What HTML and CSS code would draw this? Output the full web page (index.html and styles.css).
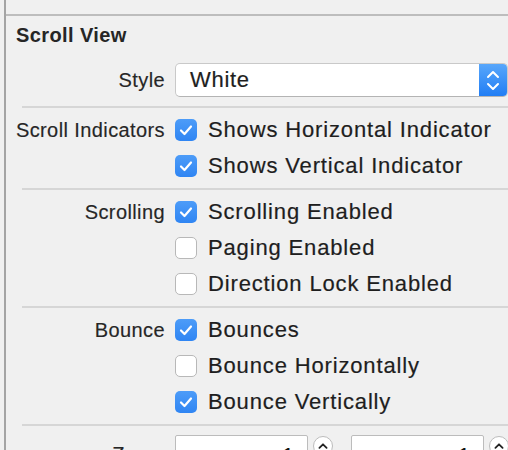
FILE: index.html
```html
<!DOCTYPE html>
<html>
<head>
<meta charset="utf-8">
<link rel="stylesheet" href="styles.css">
</head>
<body>
<div class="panel">
  <div class="topstrip"></div>
  <div class="section">
    <h2 class="title">Scroll View</h2>
    <div class="row style-row">
      <span class="lbl">Style</span>
      <div class="popup">
        <span class="popup-text">White</span>
        <span class="stepper">
          <svg width="28" height="34" viewBox="0 0 28 34"><polyline points="9,14 14,9 19,14" fill="none" stroke="#fff" stroke-width="2" stroke-linecap="round" stroke-linejoin="round"/><polyline points="9,21 14,26 19,21" fill="none" stroke="#fff" stroke-width="2" stroke-linecap="round" stroke-linejoin="round"/></svg>
        </span>
      </div>
    </div>
    <div class="group">
      <div class="row"><span class="lbl">Scroll Indicators</span><span class="cb on"><svg width="22" height="22" viewBox="0 0 22 22"><polyline points="6,11.5 9.5,15 16,7.5" fill="none" stroke="#fff" stroke-width="2.2" stroke-linecap="round" stroke-linejoin="round"/></svg></span><span class="txt">Shows Horizontal Indicator</span></div>
      <div class="row"><span class="lbl"></span><span class="cb on"><svg width="22" height="22" viewBox="0 0 22 22"><polyline points="6,11.5 9.5,15 16,7.5" fill="none" stroke="#fff" stroke-width="2.2" stroke-linecap="round" stroke-linejoin="round"/></svg></span><span class="txt">Shows Vertical Indicator</span></div>
    </div>
    <div class="group">
      <div class="row"><span class="lbl">Scrolling</span><span class="cb on"><svg width="22" height="22" viewBox="0 0 22 22"><polyline points="6,11.5 9.5,15 16,7.5" fill="none" stroke="#fff" stroke-width="2.2" stroke-linecap="round" stroke-linejoin="round"/></svg></span><span class="txt">Scrolling Enabled</span></div>
      <div class="row"><span class="lbl"></span><span class="cb"></span><span class="txt">Paging Enabled</span></div>
      <div class="row"><span class="lbl"></span><span class="cb"></span><span class="txt">Direction Lock Enabled</span></div>
    </div>
    <div class="group">
      <div class="row"><span class="lbl">Bounce</span><span class="cb on"><svg width="22" height="22" viewBox="0 0 22 22"><polyline points="6,11.5 9.5,15 16,7.5" fill="none" stroke="#fff" stroke-width="2.2" stroke-linecap="round" stroke-linejoin="round"/></svg></span><span class="txt">Bounces</span></div>
      <div class="row"><span class="lbl"></span><span class="cb"></span><span class="txt">Bounce Horizontally</span></div>
      <div class="row"><span class="lbl"></span><span class="cb on"><svg width="22" height="22" viewBox="0 0 22 22"><polyline points="6,11.5 9.5,15 16,7.5" fill="none" stroke="#fff" stroke-width="2.2" stroke-linecap="round" stroke-linejoin="round"/></svg></span><span class="txt">Bounce Vertically</span></div>
    </div>
    <div class="group last">
      <div class="zoom-row">
        <span class="lbl zlbl">Zoom</span>
        <div class="field"><span>1</span></div>
        <span class="round"><svg width="20" height="20" viewBox="0 0 20 20"><polyline points="6,11 10,7 14,11" fill="none" stroke="#222" stroke-width="2" stroke-linecap="round" stroke-linejoin="round"/></svg></span>
        <div class="field second"><span>1</span></div>
        <span class="round"><svg width="20" height="20" viewBox="0 0 20 20"><polyline points="6,11 10,7 14,11" fill="none" stroke="#222" stroke-width="2" stroke-linecap="round" stroke-linejoin="round"/></svg></span>
      </div>
    </div>
  </div>
</div>
</body>
</html>
```
FILE: styles.css
```css
html, body {
  margin: 0;
  padding: 0;
  width: 508px;
  height: 450px;
  overflow: hidden;
  background: #f0f0f0;
  font-family: "Liberation Sans", Arial, sans-serif;
  color: #1e1e1e;
}

.panel {
  margin-left: 4px;
  border-left: 2px solid #a4a4a4;
  height: 450px;
  overflow: hidden;
}

.topstrip {
  height: 14px;
  border-bottom: 2px solid #bdbdbd;
}

.title {
  margin: 7px 0 0 10px;
  height: 24px;
  line-height: 24px;
  font-size: 20px;
  font-weight: bold;
  letter-spacing: 0.4px;
  color: #262626;
}

.row {
  display: grid;
  grid-template-columns: 159px 22px 1fr;
  column-gap: 10px;
  align-items: center;
  height: 36px;
}

.txt {
  margin-left: 1px;
  font-size: 22px;
  letter-spacing: 0.85px;
  color: #1e1e1e;
  white-space: nowrap;
  -webkit-text-stroke: 0.2px #1e1e1e;
}

.lbl {
  text-align: right;
  font-size: 20px;
  letter-spacing: 0.4px;
  color: #262626;
  white-space: nowrap;
  -webkit-text-stroke: 0.15px #262626;
}

.style-row {
  grid-template-columns: 159px 1fr;
  height: 34px;
  margin-top: 16px;
  margin-bottom: 9px;
}

.popup {
  display: flex;
  align-items: center;
  justify-content: space-between;
  height: 34px;
  box-sizing: border-box;
  background: #fff;
  border: 1px solid #c9c9c9;
  border-bottom-color: #b4b4b4;
  border-radius: 5px;
  overflow: hidden;
}

.popup-text {
  padding-left: 14px;
  font-size: 22px;
  letter-spacing: 0.7px;
  color: #1e1e1e;
  -webkit-text-stroke: 0.2px #1e1e1e;
}

.stepper {
  display: flex;
  width: 28px;
  height: 34px;
  background: linear-gradient(#5aa8fb, #1f7cf4);
}

.group {
  margin-left: 16px;
  border-top: 2px solid #d6d6d6;
  padding: 4px 0;
}

.group .row {
  margin-left: -16px;
}

.cb {
  display: flex;
  width: 22px;
  height: 22px;
  box-sizing: border-box;
  border-radius: 5px;
  background: #fff;
  border: 1px solid #b8b8b8;
}

.cb.on {
  background: linear-gradient(#4d9cf8, #2f85f3);
  border: none;
}

.group.last {
  padding-top: 9px;
}

.zoom-row {
  margin-left: -16px;
  display: flex;
  align-items: flex-start;
}

.zlbl {
  width: 159px;
  flex: none;
  margin-right: 10px;
  padding-top: 8px;
  line-height: 22px;
}

.field {
  width: 133px;
  height: 40px;
  flex: none;
  box-sizing: border-box;
  background: #fff;
  border: 1px solid #bcbcbc;
  border-radius: 2px;
  text-align: right;
  padding: 4px 13px 0 0;
  font-size: 21px;
  line-height: 30px;
  color: #111;
}

.field.second {
  margin-left: 18px;
}

.round {
  display: flex;
  flex: none;
  width: 20px;
  height: 20px;
  margin-left: 5px;
  margin-top: 1px;
  box-sizing: border-box;
  border-radius: 50%;
  background: #fff;
  border: 1px solid #bcbcbc;
}
```
